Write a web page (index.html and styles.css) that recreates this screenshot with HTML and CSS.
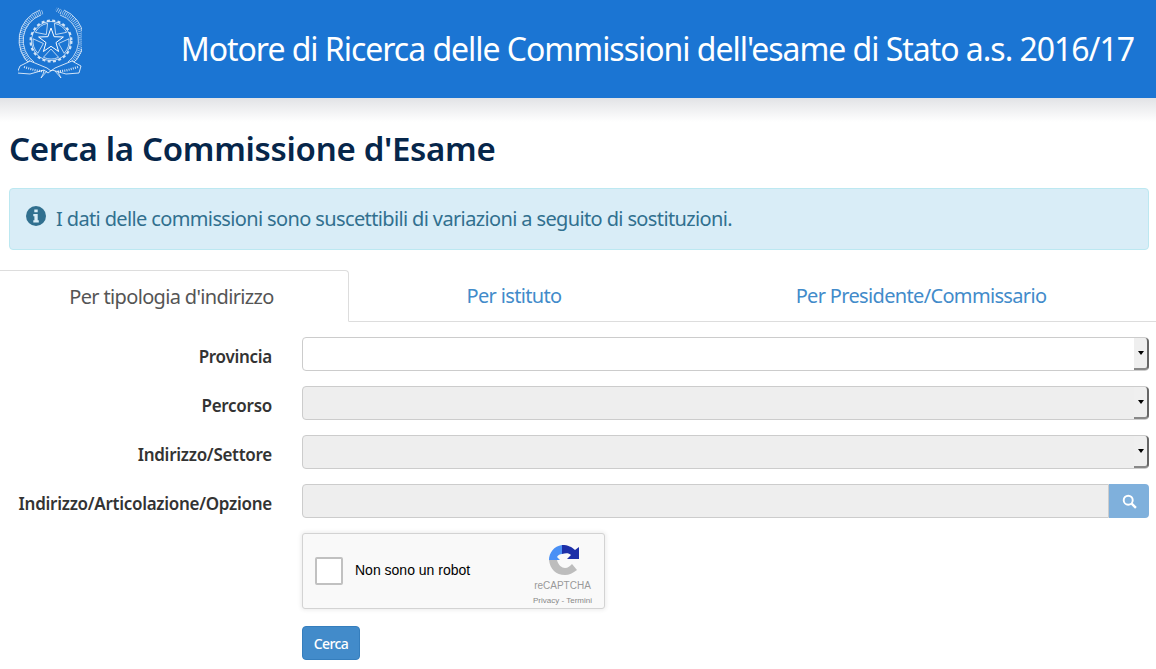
FILE: index.html
```html
<!DOCTYPE html>
<html lang="it">
	<head>
		<meta charset="UTF-8" />
		<link rel="stylesheet" href="styles.css">
		<title>Motore di Ricerca delle Commissioni</title>
	</head>
	<body>
		<header class="topbar">
			<svg class="emblem" viewBox="0 0 64 72" fill="none" stroke="#fff" stroke-width="0.7">
				<!-- wreath -->
				<path d="M14 57A30 30 0 0 1 25 5" stroke-width="4.500" stroke-dasharray="0.7 1.300" stroke-opacity="0.7" />
				<path d="M52 57A30 30 0 0 0 43 5 L38 2" stroke-width="4.500" stroke-dasharray="0.7 1.300" stroke-opacity="0.7" />
				<path d="M16 55A27 27 0 0 1 23 8M13 58A32 32 0 0 1 22 3M50 55A27 27 0 0 0 42 8M53 58A32 32 0 0 0 46 3" />
				<!-- cog -->
				<circle cx="33" cy="34" r="20.500" stroke-width="2" stroke-dasharray="3 2.400" stroke-opacity="0.8" />
				<circle cx="33" cy="34" r="19.500" />
				<!-- star -->
				<path d="M33 21l3.100 8.700 9.300.3-7.400 5.600 2.600 8.900L33 39.300l-7.600 5.200 2.600-8.900-7.400-5.600 9.300-.3z" stroke-width="1" />
				<path d="M37.700 27.500L36.400 16.300A18 18 0 0 1 48.700 25.300z" />
				<path d="M40.600 36.500L50.900 31.800A18 18 0 0 1 46.200 46.300z" />
				<path d="M33 42L40.600 50.300A18 18 0 0 1 25.400 50.300z" />
				<path d="M25.400 36.500L19.800 46.300A18 18 0 0 1 15.100 31.800z" />
				<path d="M28.300 27.500L17.300 25.300A18 18 0 0 1 29.600 16.300z" />
				<!-- ribbon -->
				<path d="M2 59l10-5 17 7 4 3 4-3 17-7 9 5-2 7-13 1-14-4-4 3-4-3-14 4-13-1z" fill="#1b75d3" stroke-width="0.8" />
				<path d="M6 60l12 3.500 9 1M60 60l-12 3.500-9 1" stroke-width="2.200" stroke-dasharray="1 1.200" stroke-opacity="0.8" />
				<path d="M29 64l-6 7M37 64l6 7M26 65l-3 6M40 65l3 6" />
			</svg>
			<div class="site-title">Motore di Ricerca delle Commissioni dell'esame di Stato a.s. 2016/17</div>
		</header>
		<div class="header-shadow"></div>

		<main class="content">
			<h1>Cerca la Commissione d'Esame</h1>
			<div class="alert">
				<svg class="alert-icon" viewBox="0 0 20 20">
					<circle cx="10" cy="10" r="10" fill="#31708f" />
					<path d="M8.300 3.500h3.400v2.800H8.300zM7.300 8h4.400v6.200h1.100v2.300H7.300v-2.300h1.100v-3.900H7.300z" fill="#d9edf7" />
				</svg>
				<span>I dati delle commissioni sono suscettibili di variazioni a seguito di sostituzioni.</span>
			</div>
		</main>

		<nav class="tabs">
			<a class="tab active">Per tipologia d'indirizzo</a>
			<a class="tab middle">Per istituto</a>
			<a class="tab last">Per Presidente/Commissario</a>
		</nav>

		<form class="search-form">
			<div class="form-row">
				<label>Provincia</label>
				<div class="field">
					<div class="select-box"></div>
					<div class="spinner"><i></i></div>
				</div>
			</div>
			<div class="form-row">
				<label>Percorso</label>
				<div class="field disabled">
					<div class="select-box"></div>
					<div class="spinner"><i></i></div>
				</div>
			</div>
			<div class="form-row">
				<label>Indirizzo/Settore</label>
				<div class="field disabled">
					<div class="select-box"></div>
					<div class="spinner"><i></i></div>
				</div>
			</div>
			<div class="form-row">
				<label>Indirizzo/Articolazione/Opzione</label>
				<div class="field disabled">
					<div class="select-box plain"></div>
					<div class="search-btn">
						<svg viewBox="0 0 14 14" width="15" height="15" fill="none" stroke="#fff">
							<circle cx="5.800" cy="5.800" r="4.200" stroke-width="1.800" />
							<path d="M9 9l4 4" stroke-width="2.200" />
						</svg>
					</div>
				</div>
			</div>

			<div class="recaptcha">
				<div class="check"></div>
				<div class="robot">Non sono un robot</div>
				<div class="rc-brand">
					<svg class="rc-logo" viewBox="0 0 30 30" width="30" height="30">
						<path d="M0 15C0 8 5 1 13 0V9C11 9 9 10 8 12L11 15z" fill="#4a90f5" />
						<path d="M13 0C19 0 23 2 26 5L30 2V14H18L22 10C20 8 17 8 13 9z" fill="#1c2fa8" />
						<path d="M0 15H8C9 20 13 23 16 23C19 23 21 21 23 19L28 25C24 28 20 30 16 30C7 30 1 24 0 15z" fill="#bdbdbd" />
					</svg>
					<div class="rc-name">reCAPTCHA</div>
					<div class="rc-links">Privacy - Termini</div>
				</div>
			</div>

			<button type="button" class="submit">Cerca</button>
		</form>
	</body>
</html>
```

FILE: styles.css
```css
* {
	box-sizing: border-box;
}

body {
	margin: 0;
	font-family: "Noto Sans", sans-serif;
	background-color: #fff;
	color: #333;
	overflow: hidden;
}

.topbar {
	display: flex;
	align-items: flex-start;
	justify-content: space-between;
	height: 98px;
	padding: 7px 22px 0 18px;
	background-color: #1b75d3;
}

.emblem {
	width: 64px;
	height: 72px;
}

.site-title {
	margin-top: 22px;
	font-size: 32px;
	line-height: 40px;
	letter-spacing: -1.03px;
	color: #fff;
}

.header-shadow {
	height: 24px;
	background: linear-gradient(#e2e3e6, #fff);
}

.content {
	padding: 0 7px 0 9px;
}

h1 {
	margin: 6px 0 18px;
	font-size: 33px;
	line-height: 42px;
	font-weight: 600;
	letter-spacing: -0.3px;
	color: #06264a;
}

.alert {
	display: flex;
	align-items: flex-start;
	gap: 10px;
	height: 62px;
	padding: 17px 16px;
	background-color: #d9edf7;
	border: 1px solid #bce8f1;
	border-radius: 4px;
	color: #31708f;
	font-size: 20px;
	line-height: 26px;
	letter-spacing: -0.63px;
}

.alert-icon {
	width: 20px;
	height: 20px;
	flex: none;
}

.tabs {
	display: flex;
	margin-top: 20px;
	height: 52px;
	border-bottom: 1px solid #ddd;
	font-size: 20px;
	letter-spacing: -0.66px;
}

.tab {
	display: flex;
	align-items: center;
	justify-content: center;
	color: #428bca;
}

.tab.active {
	width: 349px;
	height: 52px;
	padding-right: 5px;
	color: #555;
	background-color: #fff;
	border: 1px solid #ddd;
	border-left: none;
	border-bottom-color: #fff;
	border-radius: 0 4px 0 0;
}

.tab.middle {
	width: 330px;
}

.tab.last {
	width: 477px;
	padding-left: 7px;
}

.search-form {
	padding: 15px 7px 0 0;
}

.form-row {
	display: flex;
	align-items: center;
	height: 34px;
	margin-bottom: 15px;
}

label {
	width: 272px;
	margin-right: 30px;
	padding-top: 4px;
	text-align: right;
	font-size: 17px;
	font-weight: 600;
	letter-spacing: -0.28px;
	color: #333;
}

.field {
	flex: 1;
	display: flex;
	position: relative;
	height: 34px;
}

.select-box {
	flex: 1;
	background-color: #fff;
	border: 1px solid #ccc;
	border-radius: 4px;
}

.disabled .select-box {
	background-color: #eee;
}

.select-box.plain {
	border-radius: 4px 0 0 4px;
}

.spinner {
	position: absolute;
	top: 1px;
	right: 0;
	display: flex;
	align-items: center;
	justify-content: center;
	width: 15px;
	height: 32px;
	background-color: #efefef;
	border-right: 2px solid #666;
	border-bottom: 2px solid #888;
	border-radius: 0 4px 4px 0;
}

.spinner i {
	width: 0;
	height: 0;
	border-left: 3px solid transparent;
	border-right: 3px solid transparent;
	border-top: 4px solid #000;
}

.search-btn {
	display: flex;
	align-items: center;
	justify-content: center;
	width: 40px;
	background-color: #7fb0dc;
	border-radius: 0 4px 4px 0;
}

.recaptcha {
	display: flex;
	align-items: center;
	width: 303px;
	height: 76px;
	margin: 0 0 17px 302px;
	padding: 0 12px;
	background-color: #f9f9f9;
	border: 1px solid #d3d3d3;
	border-radius: 3px;
	box-shadow: 0 0 4px 1px rgba(0, 0, 0, 0.08);
}

.check {
	width: 28px;
	height: 28px;
	background-color: #fff;
	border: 2px solid #c1c1c1;
	border-radius: 2px;
}

.robot {
	margin-left: 12px;
	margin-top: -3px;
	font-family: "Liberation Sans", sans-serif;
	font-size: 14px;
	color: #000;
}

.rc-brand {
	margin-left: auto;
	margin-top: 8px;
	display: flex;
	flex-direction: column;
	align-items: center;
	font-family: "Liberation Sans", sans-serif;
	color: #999;
}

.rc-logo {
	margin-left: 2px;
}

.rc-name {
	font-size: 10px;
	line-height: 14px;
	margin-top: 4px;
}

.rc-links {
	font-size: 8px;
	line-height: 10px;
	margin-top: 3px;
	color: #888;
}

.submit {
	display: block;
	width: 58px;
	height: 34px;
	margin-left: 302px;
	padding: 0;
	font-family: inherit;
	font-size: 14px;
	font-weight: 500;
	letter-spacing: -0.6px;
	color: #fff;
	background-color: #428bca;
	border: 1px solid #357ebd;
	border-radius: 4px;
}
```
